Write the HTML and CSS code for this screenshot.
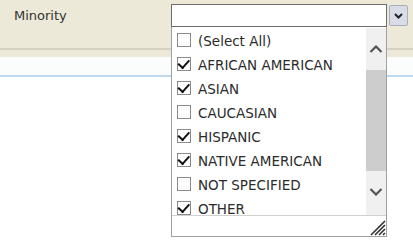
FILE: index.html
```html
<!DOCTYPE html>
<html lang="en">
<head>
    <meta charset="UTF-8">
    <title>Minority filter</title>
    <link rel="stylesheet" href="styles.css">
</head>
<body>
    <div class="filter-band">
        <div class="field-row">
            <label class="field-label" for="minority">Minority</label>
            <input type="text" id="minority" class="combo-input">
            <button class="combo-button" aria-label="Open">
                <svg width="9" height="6" viewBox="0 0 9 6"><path d="M1 1 L4.5 4.5 L8 1" fill="none" stroke="#222" stroke-width="2"/></svg>
            </button>
        </div>
    </div>
    <div class="band-rule"></div>
    <div class="band-gap"></div>
    <div class="strip"></div>

    <div class="dropdown">
        <div class="list-area">
            <ul class="check-list">
                <li><span class="box"></span>(Select All)</li>
                <li><span class="box checked"></span>AFRICAN AMERICAN</li>
                <li><span class="box checked"></span>ASIAN</li>
                <li><span class="box"></span>CAUCASIAN</li>
                <li><span class="box checked"></span>HISPANIC</li>
                <li><span class="box checked"></span>NATIVE AMERICAN</li>
                <li><span class="box"></span>NOT SPECIFIED</li>
                <li><span class="box checked"></span>OTHER</li>
            </ul>
            <div class="scrollbar">
                <div class="arrow">
                    <svg width="14" height="8" viewBox="0 0 14 8"><path d="M1.5 7 L7 1.5 L12.5 7" fill="none" stroke="#555" stroke-width="2.2"/></svg>
                </div>
                <div class="thumb"></div>
                <div class="arrow">
                    <svg width="14" height="8" viewBox="0 0 14 8"><path d="M1.5 1 L7 6.5 L12.5 1" fill="none" stroke="#555" stroke-width="2.2"/></svg>
                </div>
            </div>
        </div>
        <div class="dropdown-footer">
            <svg class="grip" width="18" height="18" viewBox="0 0 18 18">
                <path d="M17 3 L3 17 M17 7 L7 17 M17 11 L11 17 M17 15 L15 17" stroke="#333" stroke-width="1.6"/>
            </svg>
        </div>
    </div>
</body>
</html>
```

FILE: styles.css
```css
body {
    margin: 0;
    font-family: 'DejaVu Sans', Verdana, sans-serif;
    background-color: #fff;
}

.filter-band {
    height: 48px;
    background-color: #ece9d8;
}

.field-row {
    display: flex;
    align-items: flex-start;
    padding: 4px 0 0 14px;
}

.field-label {
    width: 157px;
    padding-top: 4px;
    font-size: 13px;
    color: #333;
}

.combo-input {
    box-sizing: border-box;
    width: 216px;
    height: 23px;
    margin: 0;
    border: 1px solid #6d6d6d;
    background-color: #fff;
}

.combo-button {
    display: flex;
    align-items: center;
    justify-content: center;
    box-sizing: border-box;
    width: 19px;
    height: 21px;
    margin: 1px 0 0 2px;
    padding: 0;
    border: 1px solid #a9afbd;
    border-radius: 2px;
    background-color: #d9dce8;
}

.band-rule {
    height: 2px;
    background-color: #d4d1c3;
}

.band-gap {
    height: 7px;
    background-color: #ece9d8;
}

.strip {
    height: 18px;
    background-color: #fbfcfc;
    border-bottom: 2px solid #bcd9f0;
}

.dropdown {
    position: absolute;
    left: 171px;
    top: 27px;
    width: 216px;
    height: 210px;
    box-sizing: border-box;
    border: 1px solid #a0a0a0;
    border-top: none;
    background-color: #fff;
    display: flex;
    flex-direction: column;
}

.list-area {
    display: flex;
    height: 188px;
    border-bottom: 1px solid #d0d0d0;
}

.check-list {
    flex: 1;
    list-style: none;
    margin: 0;
    padding: 5px 0 0 5px;
    overflow: hidden;
}

.check-list li {
    display: flex;
    align-items: flex-start;
    gap: 7px;
    height: 24px;
    font-size: 13.5px;
    line-height: 19px;
    color: #2b2b2b;
    white-space: nowrap;
}

.box {
    position: relative;
    flex: none;
    box-sizing: border-box;
    width: 14px;
    height: 14px;
    margin-top: 1px;
    border: 1px solid #8a8a8a;
    background-color: #fff;
}

.box.checked::after {
    content: "";
    position: absolute;
    left: 1px;
    top: 2px;
    width: 9px;
    height: 5px;
    border-left: 2px solid #111;
    border-bottom: 2px solid #111;
    transform: rotate(-48deg) translate(0, -1px);
}

.scrollbar {
    width: 20px;
    margin-top: 1px;
    background-color: #f0f0f0;
    display: flex;
    flex-direction: column;
}

.arrow {
    height: 42px;
    display: flex;
    align-items: center;
    justify-content: center;
}

.thumb {
    height: 101px;
    background-color: #cdcdcd;
}

.dropdown-footer {
    flex: 1;
    display: flex;
    justify-content: flex-end;
    align-items: flex-end;
}

.grip {
    display: block;
}
```
